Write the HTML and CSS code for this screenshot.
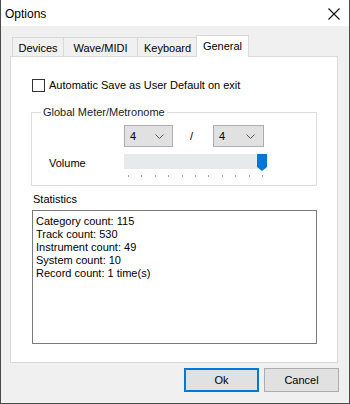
FILE: index.html
```html
<!DOCTYPE html>
<html lang="en">
<head>
    <meta charset="UTF-8">
    <meta name="viewport" content="width=device-width, initial-scale=1.0">
    <title>Options</title>
    <link rel="stylesheet" href="styles.css">
</head>
<body>
    <div class="window">
        <div class="titlebar">
            <span class="title">Options</span>
            <svg class="close" width="12" height="12" viewBox="0 0 12 12">
                <path d="M0.5 0.5L11.5 11.5M11.5 0.5L0.5 11.5" stroke="#111" stroke-width="1.1" fill="none"/>
            </svg>
        </div>

        <div class="dialog">
            <!-- Tab strip -->
            <div class="tabs">
                <div class="tab tab-devices">Devices</div>
                <div class="tab tab-wave">Wave/MIDI</div>
                <div class="tab tab-keyboard">Keyboard</div>
                <div class="tab tab-general selected">General</div>
            </div>

            <div class="panel">
                <label class="check-row">
                    <span class="checkbox"></span>
                    Automatic Save as User Default on exit
                </label>

                <fieldset class="group">
                    <legend>Global Meter/Metronome</legend>
                    <div class="group-grid">
                        <div class="meter-row">
                            <div class="combo combo-num">
                                <span>4</span>
                                <svg width="9" height="5" viewBox="0 0 9 5"><path d="M0.5 0.5L4.5 4.5L8.5 0.5" stroke="#555" fill="none"/></svg>
                            </div>
                            <span class="slash">/</span>
                            <div class="combo combo-den">
                                <span>4</span>
                                <svg width="9" height="5" viewBox="0 0 9 5"><path d="M0.5 0.5L4.5 4.5L8.5 0.5" stroke="#555" fill="none"/></svg>
                            </div>
                        </div>

                        <span class="field-label">Volume</span>
                        <div class="slider">
                            <div class="track">
                                <svg class="thumb" width="10" height="17" viewBox="0 0 10 17">
                                    <path d="M0 0H10V13L5 17L0 13Z" fill="#0078d7"/>
                                </svg>
                            </div>
                            <div class="ticks">
                                <span></span><span></span><span></span><span></span><span></span><span></span>
                                <span></span><span></span><span></span><span></span><span></span>
                            </div>
                        </div>
                    </div>
                </fieldset>

                <div class="stats-label">Statistics</div>
                <div class="stats-box">
                    <div>Category count: 115</div>
                    <div>Track count: 530</div>
                    <div>Instrument count: 49</div>
                    <div>System count: 10</div>
                    <div>Record count: 1 time(s)</div>
                </div>
            </div>

            <div class="buttons">
                <button class="btn default">Ok</button>
                <button class="btn">Cancel</button>
            </div>
        </div>
    </div>
</body>
</html>
```

FILE: styles.css
```css
body {
    margin: 0;
    padding: 0;
    background-color: #f0f0f0;
    font-family: "Liberation Sans", Arial, sans-serif;
    font-size: 11px;
    color: #000;
}

.window {
    width: 350px;
    height: 404px;
    box-sizing: border-box;
    border: 1px solid #4b4b4b;
    border-top: none;
    background-color: #f0f0f0;
}

.titlebar {
    height: 26px;
    background-color: #fff;
    display: flex;
    align-items: center;
    justify-content: space-between;
}

.title {
    font-size: 12px;
    padding-left: 4px;
    padding-top: 1px;
}

.close {
    margin-right: 9px;
    margin-top: 1px;
}

.dialog {
    padding: 0 11px 0 9px;
}

/* Tab strip */
.tabs {
    display: flex;
    align-items: flex-end;
    height: 21px;
    margin-top: 9px;
    padding-left: 2px;
}

.tab {
    height: 19px;
    line-height: 21px;
    box-sizing: border-box;
    border: 1px solid #d9d9d9;
    border-bottom: none;
    background-color: #f0f0f0;
    text-align: center;
    margin-left: -1px;
}

.tab-devices { width: 52px; margin-left: 0; }
.tab-wave { width: 75px; }
.tab-keyboard { width: 61px; }
.tab-general { width: 53px; margin-left: -2px; }

.tab.selected {
    height: 22px;
    line-height: 20px;
    background-color: #fff;
    margin-bottom: -1px;
    position: relative;
    z-index: 1;
}

.panel {
    background-color: #fff;
    border: 1px solid #d9d9d9;
    padding: 22px 20px 18px 20px;
}

.check-row {
    display: flex;
    align-items: center;
    line-height: 13px;
    margin-left: 1px;
}

.checkbox {
    width: 13px;
    height: 13px;
    box-sizing: border-box;
    border: 1px solid #333;
    background-color: #fff;
    margin-right: 4px;
}

/* Group box */
.group {
    margin: 14px 0 0 0;
    padding: 6px 0 8px 17px;
    border: 1px solid #dcdcdc;
    min-width: 0;
}

.group legend {
    padding: 0 2px;
    margin-left: -8px;
    line-height: 13px;
    color: #222;
}

.group-grid {
    display: grid;
    grid-template-columns: 75px auto;
    row-gap: 7px;
}

.meter-row {
    grid-column: 2;
    display: flex;
    align-items: center;
}

.combo {
    height: 22px;
    box-sizing: border-box;
    border: 1px solid #adadad;
    background-color: #e1e1e1;
    display: flex;
    align-items: center;
    justify-content: space-between;
    padding: 0 8px 0 5px;
}

.combo-num { width: 49px; }
.combo-den { width: 51px; }

.slash {
    width: 43px;
    text-align: center;
    margin-left: -3px;
}

.field-label {
    line-height: 15px;
    padding-top: 2px;
}

.slider {
    width: 143px;
}

.track {
    height: 15px;
    background-color: #e7eaea;
    display: flex;
    justify-content: flex-end;
    align-items: flex-start;
}

.thumb {
    flex: none;
}

.ticks {
    display: flex;
    justify-content: space-between;
    padding: 0 4px;
    margin-top: 6px;
}

.ticks span {
    width: 1px;
    height: 2px;
    background-color: #a0a0a0;
}

/* Statistics */
.stats-label {
    line-height: 13px;
    margin-top: 7px;
    margin-left: 2px;
}

.stats-box {
    margin-top: 4px;
    margin-left: 1px;
    height: 134px;
    box-sizing: border-box;
    border: 1px solid #7a7a7a;
    padding: 4px 3px;
    line-height: 13px;
}

/* Buttons */
.buttons {
    display: flex;
    justify-content: flex-end;
    gap: 5px;
    margin-top: 5px;
    margin-right: -1px;
}

.btn {
    width: 75px;
    height: 24px;
    font-family: "Liberation Sans", Arial, sans-serif;
    font-size: 11px;
    color: #000;
    background-color: #e1e1e1;
    border: 1px solid #adadad;
    padding: 0;
}

.btn.default {
    border-color: #0078d7;
    box-shadow: inset 0 0 0 1px #0078d7;
}
```
